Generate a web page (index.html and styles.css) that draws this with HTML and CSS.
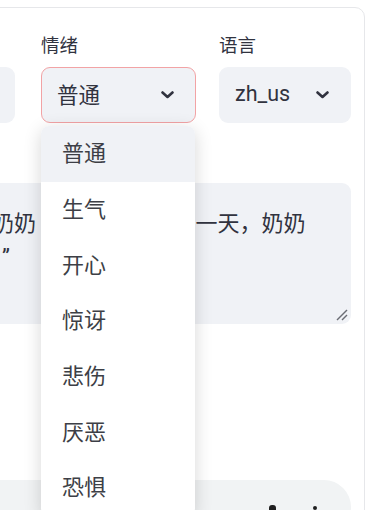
FILE: index.html
```html
<!DOCTYPE html>
<html lang="zh">
<head>
    <meta charset="UTF-8">
    <meta name="viewport" content="width=device-width, initial-scale=1.0">
    <title>语音合成</title>
    <link rel="stylesheet" href="styles.css">
</head>
<body>
    <div class="card">
        <div class="row">
            <div class="col col-voice">
                <div class="label">音色</div>
                <div class="select"><span>女声</span></div>
            </div>

            <div class="col col-emotion">
                <div class="label">情绪</div>
                <div class="field">
                    <div class="select is-open">
                        <span>普通</span>
                        <svg class="chevron" width="13" height="8" viewBox="0 0 13 8"><polyline points="1.5,1.5 6.5,6 11.5,1.5" fill="none" stroke="#31333f" stroke-width="2.6" stroke-linecap="round" stroke-linejoin="round"/></svg>
                    </div>
                    <ul class="menu">
                        <li class="menu-item active">普通</li>
                        <li class="menu-item">生气</li>
                        <li class="menu-item">开心</li>
                        <li class="menu-item">惊讶</li>
                        <li class="menu-item">悲伤</li>
                        <li class="menu-item">厌恶</li>
                        <li class="menu-item">恐惧</li>
                    </ul>
                </div>
            </div>

            <div class="col col-lang">
                <div class="label">语言</div>
                <div class="select">
                    <span>zh_us</span>
                    <svg class="chevron" width="13" height="8" viewBox="0 0 13 8"><polyline points="1.5,1.5 6.5,6 11.5,1.5" fill="none" stroke="#31333f" stroke-width="2.6" stroke-linecap="round" stroke-linejoin="round"/></svg>
                </div>
            </div>
        </div>

        <div class="textarea">
            从前有个小女孩和奶奶 住在森林边。有一天，奶奶<br><span class="tail">去给外婆送点心吧</span>”
            <svg class="resize" width="12" height="12" viewBox="0 0 12 12"><line x1="1" y1="11" x2="11" y2="1" stroke="#6b6d74" stroke-width="1.4"/><line x1="6" y1="11" x2="11" y2="6" stroke="#6b6d74" stroke-width="1.4"/></svg>
        </div>

        <div class="player">
            <span class="player-icon vol"></span>
            <span class="player-icon dots"></span>
        </div>
    </div>
</body>
</html>
```

FILE: styles.css
```css
* {
    margin: 0;
    padding: 0;
    box-sizing: border-box;
}

body {
    font-family: 'Roboto', 'Noto Sans CJK SC', sans-serif;
    background: #fff;
    color: #31333f;
    width: 371px;
    height: 510px;
    overflow: hidden;
}

.card {
    margin: 7px 0 0 -210px;
    width: 575px;
    height: 620px;
    padding: 26px 13px 0;
    border: 1px solid #e6e7ea;
    border-radius: 10px;
}

.row {
    display: flex;
}

.col-voice {
    flex: 1;
}

.col-emotion {
    width: 155px;
    margin: 0 23px 0 26px;
}

.col-lang {
    width: 132px;
}

.label {
    font-size: 18.5px;
    line-height: 24px;
    margin-bottom: 9px;
}

.field {
    position: relative;
}

.select {
    height: 56px;
    background: #f0f2f6;
    border: 1px solid transparent;
    border-radius: 9px;
    display: flex;
    align-items: center;
    justify-content: space-between;
    padding: 0 21px 3px 15px;
    font-size: 21.5px;
}

.select .chevron {
    margin-top: 2px;
}

.select.is-open {
    border-color: #f2a3a5;
}

.menu {
    position: absolute;
    top: 59px;
    left: 0;
    width: 154px;
    list-style: none;
    background: #fff;
    border-radius: 8px;
    box-shadow: 0 4px 18px rgba(0, 0, 0, 0.16);
    overflow: hidden;
    z-index: 10;
}

.menu-item {
    height: 55.7px;
    display: flex;
    align-items: center;
    padding: 0 0 5px 21px;
    font-size: 22px;
    color: #3d3f46;
}

.menu-item.active {
    background: #f0f2f6;
}

.textarea {
    position: relative;
    margin-top: 60px;
    height: 141px;
    background: #f0f2f6;
    border-radius: 9px;
    padding: 24px 40px 0 12px;
    font-size: 22px;
    line-height: 33px;
    white-space: nowrap;
}

.tail {
    margin-right: 10px;
}

.resize {
    position: absolute;
    right: 3px;
    bottom: 3px;
}

.player {
    margin-top: 156px;
    height: 54px;
    background: #f1f3f4;
    border-radius: 27px;
    display: flex;
    justify-content: flex-end;
    align-items: flex-start;
    padding: 25px 34px 0 0;
    gap: 37px;
}

.player-icon {
    display: block;
    background: #1f1f1f;
}

.vol {
    width: 7px;
    height: 10px;
    border-radius: 3px 3px 0 0;
}

.dots {
    width: 4px;
    height: 4px;
    border-radius: 50%;
    margin-top: 1px;
}
```
